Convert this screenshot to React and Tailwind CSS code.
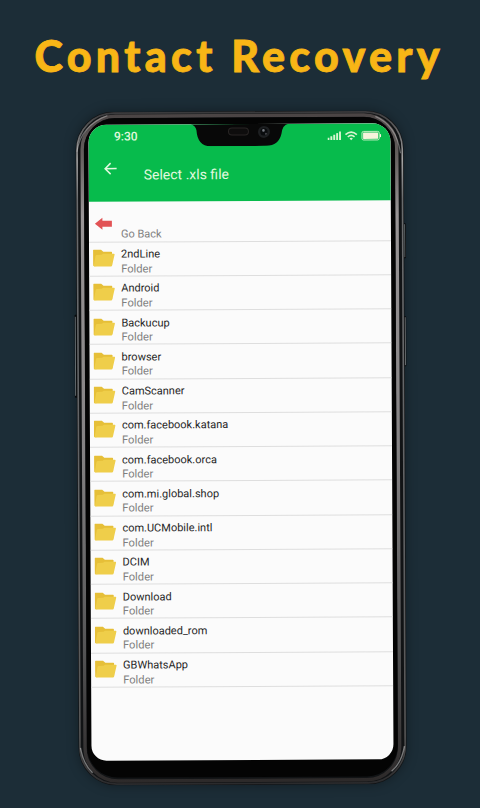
const folders = [
  '2ndLine',
  'Android',
  'Backucup',
  'browser',
  'CamScanner',
  'com.facebook.katana',
  'com.facebook.orca',
  'com.mi.global.shop',
  'com.UCMobile.intl',
  'DCIM',
  'Download',
  'downloaded_rom',
  'GBWhatsApp',
]

function FolderIcon() {
  return (
    <svg viewBox="0 0 22 19" className="h-[19px] w-[22px] shrink-0">
      <path d="M0 1.5Q0 1 .6 1H8L10.3 3H18.3Q19 3 19 3.7V16L1 17.5Q0 17.5 0 16.5Z" fill="#e6bf38" />
      <path d="M2.4 7.4Q2.6 6.2 3.8 6.2L8.5 6L10 5.2H20.8Q21.8 5.2 21.5 6.2L19 16.8Q18.8 17.8 17.8 17.8H1.4Q.5 17.8 .7 16.8Z" fill="#efce4a" />
    </svg>
  )
}

function PhoneFrame() {
  return (
    <svg viewBox="0 0 332 674" className="absolute -left-0.5 top-0 h-[674px] w-[332px]">
      <defs>
        <linearGradient id="rim" x1="0" y1="0" x2="0" y2="1">
          <stop offset="0" stopColor="#3a3a3c" />
          <stop offset=".07" stopColor="#a5a5a5" />
          <stop offset=".13" stopColor="#696b6d" />
          <stop offset=".6" stopColor="#606264" />
          <stop offset=".93" stopColor="#555" />
          <stop offset="1" stopColor="#2b2b2d" />
        </linearGradient>
        <linearGradient id="band" x1="0" y1="0" x2="0" y2="1">
          <stop offset="0" stopColor="#4b4545" />
          <stop offset=".06" stopColor="#66605f" />
          <stop offset=".15" stopColor="#999596" />
          <stop offset=".5" stopColor="#858384" />
          <stop offset=".8" stopColor="#555556" />
          <stop offset="1" stopColor="#2d2a2a" />
        </linearGradient>
      </defs>
      <rect x="0" y="203" width="3" height="83" rx="1" fill="#080a0c" />
      <path d="M.9 205V284" stroke="#7c8488" strokeWidth=".8" />
      <rect x="328" y="113" width="4" height="35" rx="1" fill="#080a0c" />
      <path d="M330.7 114V147" stroke="#6f7779" strokeWidth=".9" />
      <rect x="328" y="206" width="4" height="50" rx="1" fill="#080a0c" />
      <path d="M330.7 207V255" stroke="#8a9092" strokeWidth=".9" />
      <rect x="2" y="0" width="328.2" height="674" rx="38" fill="#111315" />
      <rect x="3.5" y="1.5" width="325.2" height="671" rx="37" fill="none" stroke="url(#rim)" strokeWidth="1.6" />
      <rect x="8.6" y="4.6" width="314.6" height="664.8" rx="33" fill="none" stroke="url(#band)" strokeWidth="3.4" />
      <rect x="10.5" y="6.6" width="310.8" height="659.4" rx="31" fill="#040404" />
      <path d="M3.5 40Q7 14 34 4" fill="none" stroke="#ddd" strokeWidth="1.2" opacity=".4" />
      <path d="M302 6Q323 15 327 43" fill="none" stroke="#ddd" strokeWidth="1.2" opacity=".4" />
      <path d="M4 636Q7 653 16 661" fill="none" stroke="#ddd" strokeWidth="1.4" opacity=".5" />
      <path d="M328 636Q325 653 315 661" fill="none" stroke="#ddd" strokeWidth="1.4" opacity=".5" />
    </svg>
  )
}

function Notch() {
  return (
    <svg viewBox="0 0 98 22" className="absolute left-[102px] top-0 h-[22px] w-[98px]">
      <path d="M0 0Q5 1 6 6Q7 22 20 22H76Q88 22 91 10Q92 1 98 0Z" fill="#080808" />
      <rect x="38" y="4" width="20" height="7" rx="3.5" fill="#0e0d0d" stroke="#282524" />
      <circle cx="73.5" cy="8" r="6" fill="#1d1f21" />
      <circle cx="73.5" cy="8" r="3.6" fill="#090b0d" />
      <circle cx="73" cy="6.5" r="1.3" fill="#777b82" />
      <circle cx="75.5" cy="10" r="1" fill="#45464b" />
    </svg>
  )
}

function StatusIcons() {
  return (
    <svg viewBox="0 0 54 11" className="h-[11px] w-[54px]" fill="#d8f5cf">
      <rect x="0" y="7.3" width="1.9" height="2.2" />
      <rect x="2.9" y="5.8" width="1.9" height="3.7" />
      <rect x="5.8" y="4.2" width="1.9" height="5.3" />
      <rect x="8.7" y="2.6" width="1.9" height="6.9" />
      <rect x="11.6" y="1" width="1.9" height="8.5" />
      <g fill="none" stroke="#d8f5cf" strokeWidth="1.6">
        <path d="M18 4.2Q23.7-1 29.4 4.2" />
        <path d="M20.3 6.5Q23.7 3.3 27.1 6.5" />
      </g>
      <path d="M22 8Q23.7 6.5 25.4 8L23.7 9.8Z" />
      <rect x="34.5" y="1" width="17.2" height="8.6" rx="1.6" fill="none" stroke="#d8f5cf" strokeWidth=".9" />
      <rect x="35.6" y="2.1" width="15" height="6.4" rx=".5" fill="#f6f3dc" />
      <rect x="52.4" y="3.7" width="1.2" height="3.2" rx=".6" fill="#f6f3dc" />
    </svg>
  )
}

export default function App() {
  return (
    <div className="h-[808px] w-[480px] overflow-hidden bg-[#1c2d37] font-['Roboto',sans-serif]">
      <h1 className="h-[111px] whitespace-nowrap pl-[34.5px] pt-[30px] font-['Lato',sans-serif] text-[43px] font-black leading-[52px] tracking-[4.3px] text-[#f8b616] [-webkit-text-stroke:0.8px_#f8b616]">
        Contact Recovery
      </h1>

      <div className="relative ml-[77px] h-[674px] w-[328px] -rotate-[0.28deg] rounded-[38px] px-[12.5px] pt-[12.5px] shadow-[0_0_12px_rgba(0,0,0,0.35)]">
        <PhoneFrame />

        <div className="relative h-[636px] w-[302.5px] overflow-hidden rounded-t-[18px] rounded-b-[15px] bg-[#fbfbfb]">
          <Notch />
          <header className="h-[77px] bg-[#07bb4c] text-[#e2f9df]">
            <div className="flex h-[25px] items-center justify-between pl-[26px] pr-[9px]">
              <span className="text-[12px] font-medium">9:30</span>
              <StatusIcons />
            </div>
            <div className="flex items-center pl-[15px]">
              <svg viewBox="0 0 14 14" className="mt-[3px] h-[14px] w-[14px]" fill="none" stroke="currentColor" strokeWidth="1.5">
                <path d="M13 7H1.5M7 1.5L1.5 7L7 12.5" />
              </svg>
              <span className="ml-[26.5px] mt-[15px] text-[14px] leading-[20px]">Select .xls file</span>
            </div>
          </header>

          <div className="flex h-[41px] border-b border-[#dedede] pl-[6.5px]">
            <svg viewBox="0 0 18 14" className="mt-[15.5px] h-[14px] w-[18px]">
              <path d="M0 7L7.5 1V4H17V10H7.5V13Z" fill="#e25355" />
            </svg>
            <span className="ml-[8px] mt-[26.5px] text-[11px] leading-[14px] text-[#808080]">Go Back</span>
          </div>

          {folders.map((name) => (
            <div key={name} className="flex h-[34.27px] items-start border-b border-[#dedede] pl-[4.5px] pt-[5.5px]">
              <div className="mt-px">
                <FolderIcon />
              </div>
              <div className="ml-[6px]">
                <div className="text-[11px] leading-[14.5px] text-[#252525]">{name}</div>
                <div className="text-[11.2px] leading-[14.5px] text-[#808080]">Folder</div>
              </div>
            </div>
          ))}
        </div>
      </div>
    </div>
  )
}
